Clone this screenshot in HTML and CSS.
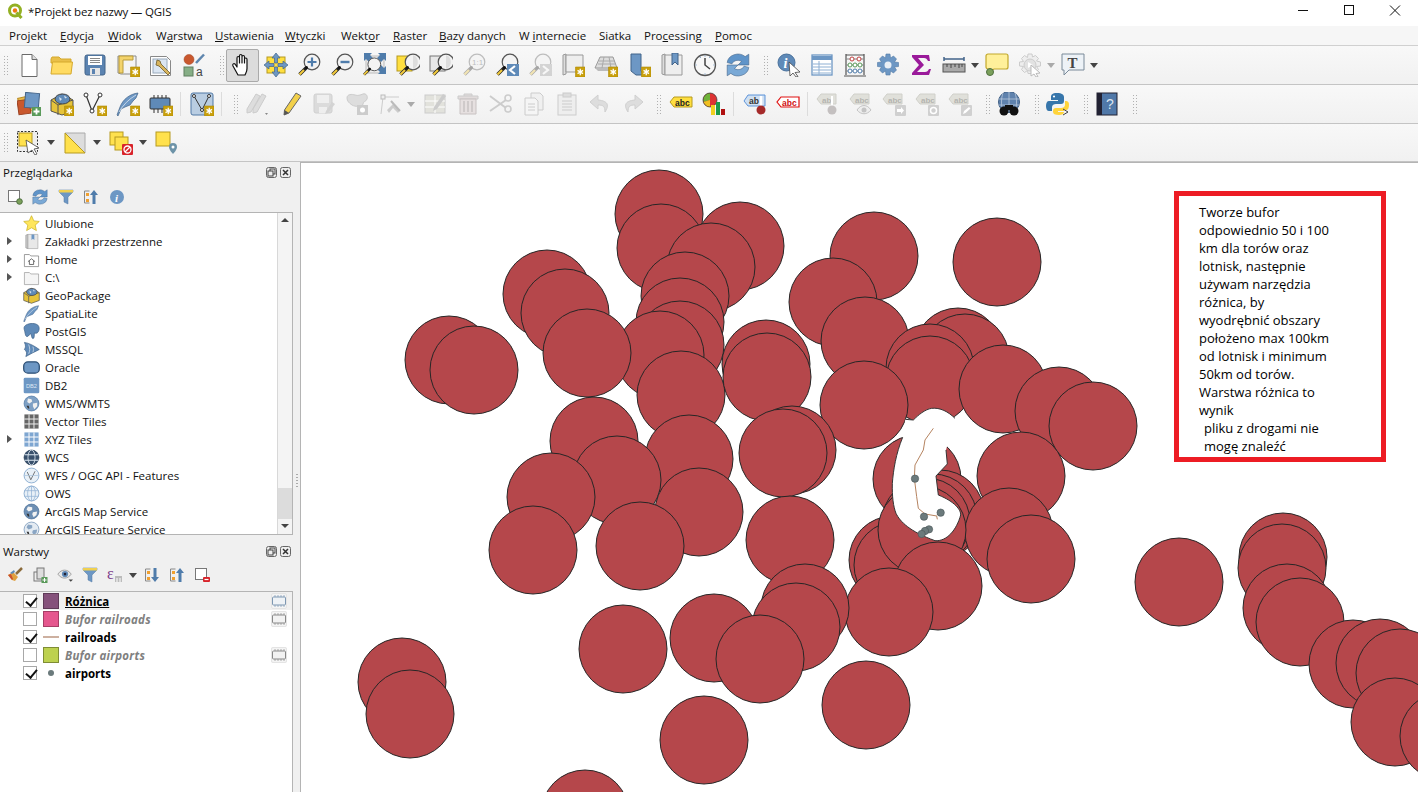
FILE: index.html
```html
<!DOCTYPE html>
<html lang="pl">
<head>
<meta charset="utf-8">
<title>*Projekt bez nazwy — QGIS</title>
<link rel="stylesheet" href="styles.css">
</head>
<body>
<svg class="defs" width="0" height="0">
<defs>
<g id="star"><path d="M14.500 14h9.500v10h-9.500z" fill="#c9a00c" stroke="#b08a08" stroke-width=".6"/><path d="M19.250 15.800v6.400M16.500 17.400l5.500 3.200M22 17.400l-5.500 3.200" stroke="#fff" stroke-width="1.300"/></g>
<symbol id="new" viewBox="0 0 24 24"><path d="M5 1.500h10l5 5v17H5z" fill="#fff" stroke="#6a6a6a"/><path d="M15 1.500v5h5" fill="#ddd" stroke="#6a6a6a"/></symbol>
<symbol id="open" viewBox="0 0 24 24"><path d="M1 6l1-2h7l2 2h10v4H1z" fill="#e9bf49" stroke="#d5a92d"/><path d="M1 21l1.500-12h20L21 21z" fill="#ffdb63" stroke="#d5a92d"/></symbol>
<symbol id="save" viewBox="0 0 24 24"><rect x="2" y="2" width="20" height="20" rx="2" fill="#5b83b1" stroke="#43648a"/><rect x="5" y="3" width="14" height="9" fill="#fff"/><path d="M7 5.500h10M7 7.500h10M7 9.500h10" stroke="#888"/><rect x="7" y="15" width="10" height="7" fill="#e6e6e6"/><rect x="9" y="16" width="3" height="5" fill="#5b83b1"/></symbol>
<symbol id="templ" viewBox="0 0 24 24"><path d="M2 3h18v18H5l-3-1z" fill="#f4f4f4" stroke="#8a8a8a"/><path d="M3 3h14v4H7v13H3z" fill="#f3d36b" stroke="#b99b3a"/><use href="#star"/></symbol>
<symbol id="layout" viewBox="0 0 24 24"><path d="M1.500 3.500h16l4 4v15h-20z" fill="#fff" stroke="#888"/><rect x="4" y="6" width="14" height="14" fill="#dbe6f3" stroke="#9ab"/><path d="M8 7l3 1 1 3 9 9-2 2-9-9-3-1z" fill="#d8b55e" stroke="#6d5a2a" stroke-width=".8"/></symbol>
<symbol id="style" viewBox="0 0 24 24"><circle cx="7" cy="6.500" r="5" fill="#c9582e" stroke="#a14522" stroke-width=".5"/><path d="M14 10L22 1.500" stroke="#5f86ae" stroke-width="2.500"/><rect x="2" y="14" width="9" height="9" fill="#86ae86" stroke="#5f7f5f"/><text x="14" y="23" class="svt" font-size="12" fill="#444">a</text></symbol>
<symbol id="hand" viewBox="0 0 24 24"><path d="M7 22l-5-9c-1-2 1-3 2-2l2 3V5c0-2 2.500-2 2.500 0v5V3c0-2 2.500-2 2.500 0v7V4c0-2 2.500-2 2.500 0v6-3.500c0-2 2.500-2 2.500 0v9c0 3-1 4-2 6.500z" fill="#fff" stroke="#111" stroke-width="1.200" stroke-linejoin="round"/></symbol>
<symbol id="panmap" viewBox="0 0 24 24"><rect x="3" y="4" width="18" height="16" fill="#ffdf3f" stroke="#b69a20"/><path d="M12 0l4 5h-2.500v5h-3V5H8zM12 24l4-5h-2.500v-5h-3v5H8zM0 12l5-4v2.500h5v3H5V16zM24 12l-5-4v2.500h-5v3h5V16z" fill="#6d97c4" stroke="#43648a" stroke-width=".7"/></symbol>
<g id="lens"><circle cx="15" cy="9" r="7.800" fill="#f3f3f3" stroke="#555" stroke-width="1.200"/><path d="M9.500 14.500L2.500 21.500" stroke="#222" stroke-width="3.400"/><path d="M7 17L2.500 21.500" stroke="#f2ca3d" stroke-width="2.200"/><circle cx="9.500" cy="14.500" r="1.500" fill="#111"/></g>
<symbol id="zin" viewBox="0 0 24 24"><use href="#lens"/><path d="M15 4.500v9M10.500 9h9" stroke="#4f7cab" stroke-width="2.200"/></symbol>
<symbol id="zout" viewBox="0 0 24 24"><use href="#lens"/><path d="M10.500 9h9" stroke="#4f7cab" stroke-width="2.400"/></symbol>
<symbol id="zfull" viewBox="0 0 24 24"><rect x="3" y="3" width="18" height="17" fill="#eee" stroke="#bbb"/><path d="M1 0h8L7 2l3 3-4 4-3-3-2 2zM23 0h-8l2 2-3 3 4 4 3-3 2 2zM23 21h-8l2-2-3-3 4-4 3 3 2-2z" fill="#4f7cab"/><use href="#lens" transform="translate(-1 4) scale(.82)"/></symbol>
<symbol id="zsel" viewBox="0 0 24 24"><rect x="1" y="3" width="15" height="15" fill="#ffdf3f" stroke="#b69a20"/><use href="#lens" transform="translate(2 0)"/><path d="M17 2a7.500 7.500 0 0 1 0 14z" fill="#ddd"/></symbol>
<symbol id="zlay" viewBox="0 0 24 24"><rect x="1" y="3" width="15" height="15" fill="#e8e8e8" stroke="#777"/><use href="#lens" transform="translate(2 0)"/><path d="M17 2a7.500 7.500 0 0 1 0 14z" fill="#ddd"/></symbol>
<symbol id="znat" viewBox="0 0 24 24"><g opacity=".35"><use href="#lens"/><text x="10" y="12" class="svt" font-size="8" fill="#555">1:1</text></g></symbol>
<symbol id="zlast" viewBox="0 0 24 24"><use href="#lens"/><rect x="12" y="11" width="12" height="12" fill="#5f8ab8"/><path d="M20 13l-5 4 5 4" fill="none" stroke="#fff" stroke-width="2.200"/></symbol>
<symbol id="znext" viewBox="0 0 24 24"><g opacity=".35"><use href="#lens"/><rect x="12" y="11" width="12" height="12" fill="#999"/><path d="M15 13l5 4-5 4" fill="none" stroke="#fff" stroke-width="2.200"/></g></symbol>
<symbol id="view" viewBox="0 0 24 24"><path d="M2 2l3-1v20l-3 1z" fill="#ddd" stroke="#999"/><path d="M5 2h17v17H5z" fill="#eee" stroke="#999"/><use href="#star"/></symbol>
<symbol id="view3d" viewBox="0 0 24 24"><path d="M6 4h13l4 11H1z" fill="#ddd" stroke="#999"/><path d="M5 8h15M4 11h17M10 4L8 15M15 4l2 11" stroke="#aaa" fill="none"/><path d="M1 15h18v3H4z" fill="#bbb"/><use href="#star"/></symbol>
<symbol id="bm" viewBox="0 0 24 24"><path d="M4 1h10v17l3 4H9L4 18z" fill="#6d97c4" stroke="#43648a"/><use href="#star"/></symbol>
<symbol id="bms" viewBox="0 0 24 24"><path d="M2 2l3-1v21l-3-1z" fill="#ddd" stroke="#999"/><path d="M5 2h17v20H5z" fill="#eee" stroke="#999"/><path d="M12 0h6v12l-3-3-3 3z" fill="#6d97c4" stroke="#43648a"/></symbol>
<symbol id="clock" viewBox="0 0 24 24"><circle cx="12" cy="12" r="10.500" fill="#f7f7f7" stroke="#555" stroke-width="1.300"/><path d="M12 5v7l5 4" fill="none" stroke="#444" stroke-width="1.500"/><path d="M12 2.500v1M12 20.500v1M2.500 12h1M20.500 12h1M7 3.800l.5 1M17 3.800l-.5 1" stroke="#5f8ab8"/></symbol>
<symbol id="sync" viewBox="2 2 20 20"><path d="M3 10a9 8 0 0 1 15-5l3-2v9h-9l3-3a5 4 0 0 0-8 2z" fill="#5f94c9" stroke="#43648a" stroke-width=".5"/><path d="M21 14a9 8 0 0 1-15 5l-3 2v-9h9l-3 3a5 4 0 0 0 8-2z" fill="#7aa9d6" stroke="#43648a" stroke-width=".5"/></symbol>
<symbol id="ident" viewBox="0 0 24 24"><circle cx="9.500" cy="9.500" r="8.500" fill="#5f8ab8" stroke="#48709b"/><text x="6.500" y="14.500" class="svi" font-size="14" fill="#fff">i</text><path d="M12 9l11 10-5 .5 3 4-2 .5-3-4-3 3z" fill="#fff" stroke="#444" stroke-width=".8"/></symbol>
<symbol id="table" viewBox="0 0 24 24"><rect x="2" y="2" width="20" height="20" fill="#fff" stroke="#6d97c4" stroke-width="1.300"/><path d="M2 3h20v4H2z" fill="#6d97c4"/><path d="M9 8v14M3 11h18M3 14h18M3 17h18M3 20h18" stroke="#8fb0d3"/></symbol>
<symbol id="abacus" viewBox="0 0 24 24"><path d="M3 1v21M21 1v21M1 23h22M3 2h18" stroke="#555" stroke-width="1.200" fill="none"/><path d="M3 6h18M3 12h18M3 18h18" stroke="#888"/><g fill="#fff" stroke="#c24040"><circle cx="9" cy="6" r="2"/><circle cx="16" cy="6" r="2"/></g><g fill="#fff" stroke="#5a9a5a"><circle cx="7" cy="12" r="2"/><circle cx="12" cy="12" r="2"/><circle cx="17" cy="12" r="2"/></g><g fill="#fff" stroke="#4f7cab"><circle cx="7" cy="18" r="2"/><circle cx="12" cy="18" r="2"/><circle cx="17" cy="18" r="2"/></g></symbol>
<symbol id="gear" viewBox="0 0 24 24"><path d="M10 1h4l.5 4 3-2 3 3-2 3 4 .5v4l-4 .5 2 3-3 3-3-2-.5 4h-4l-.5-4-3 2-3-3 2-3-4-.5v-4l4-.5-2-3 3-3 3 2z" fill="#6d97c4" stroke="#5078a5" stroke-width=".6"/><circle cx="12" cy="12" r="3.500" fill="#e9eff6"/></symbol>
<symbol id="sigma" viewBox="0 0 24 24"><path d="M3 2h17l1 6h-2c-1-2-2-3-4-3H9l6 7-7 7h8c2 0 3-1 4-3h2l-2 6H3v-2l7-8-7-8z" fill="#9a1a9a"/></symbol>
<symbol id="ruler" viewBox="0 0 24 24"><path d="M2 4v4M22 4v4M2 6h20" stroke="#43648a" stroke-width="1.500"/><rect x="1" y="11" width="22" height="8" fill="#aaa" stroke="#555"/><path d="M5 11v3M9 11v4M13 11v3M17 11v4M20 11v3" stroke="#444"/></symbol>
<symbol id="note" viewBox="0 0 24 24"><path d="M3 1h18a2 2 0 0 1 2 2v11a2 2 0 0 1-2 2H9l-3 2-1-2H3a2 2 0 0 1-2-2V3a2 2 0 0 1 2-2z" fill="#fff09a" stroke="#c2a82c" stroke-width="1.200"/><circle cx="5" cy="19" r="3.500" fill="#7ba05b" stroke="#4f7040"/></symbol>
<symbol id="gearoff" viewBox="0 0 24 24"><path d="M10 1h4l.5 3 3-1.500 3 3-2 2.500 4 1v4l-4 .5 2 3-3 3-3-2-.5 3h-4l-.5-3-3 2-3-3 2-3-4-.5v-4l4-.5-2-3 3-3 3 2z" fill="#eee" stroke="#ccc"/><circle cx="12" cy="12" r="6" fill="#e2e2e2" stroke="#ccc"/><path d="M10 9v6l5-3z" fill="#fff"/><path d="M13 12l9 8-4 .5 2 3-2 .5-2-3-3 2z" fill="#fff" stroke="#bbb"/></symbol>
<symbol id="textann" viewBox="0 0 24 24"><path d="M1 1h22v16H8l-5 5v-5H1z" fill="#edf2f7" stroke="#7a8a99"/><text x="6.500" y="14.500" class="svs" font-size="15" font-weight="700" fill="#444">T</text></symbol>
<symbol id="addlay" viewBox="0 0 24 24"><rect x="2" y="5" width="13" height="15" fill="#e8b94a" stroke="#b98a20" transform="rotate(-12 8 12)"/><rect x="1" y="8" width="12" height="14" fill="#c9582e" stroke="#9a4020" transform="rotate(-8 7 15)"/><rect x="8" y="1" width="14" height="15" fill="#6d97c4" stroke="#43648a" transform="rotate(5 15 8)"/><rect x="15" y="15" width="9" height="9" fill="#5a9a5a"/><path d="M19.500 16.500v6M16.500 19.500h6" stroke="#fff" stroke-width="1.800"/></symbol>
<symbol id="gpkg" viewBox="0 0 24 24"><path d="M1 8l11-6 11 6v11l-11 4L1 19z" fill="#e6c33a" stroke="#444" stroke-width=".9"/><path d="M1 8l7 5 15-5" fill="none" stroke="#555"/><path d="M8 13v10" stroke="#555"/><ellipse cx="12.500" cy="7" rx="7.500" ry="5" fill="#5f8ab8" stroke="#444"/><path d="M9 5l3 2-2 2zM14 3.500l3 2-2 1z" fill="#d8e3ee"/></symbol>
<symbol id="gpkgb" viewBox="0 0 24 24"><use href="#gpkg"/><use href="#star"/></symbol>
<symbol id="newv" viewBox="0 0 24 24"><path d="M3 3l6 16 8-16" fill="none" stroke="#333" stroke-width="1.200"/><g fill="#fff" stroke="#333"><circle cx="3" cy="3" r="2"/><circle cx="9" cy="19" r="2"/><circle cx="17" cy="3" r="2"/></g><use href="#star"/></symbol>
<symbol id="quill" viewBox="0 0 24 24"><path d="M22 1C14 2 7 7 4 15l-3 8 1 1 3-7 4-2 5-2 3-4 3-3z" fill="#6d97c4" stroke="#43648a" stroke-width=".7"/><path d="M3 20C7 13 13 7 20 3" stroke="#dce6f0" fill="none" stroke-width=".8"/></symbol>
<symbol id="quillb" viewBox="0 0 24 24"><use href="#quill"/><use href="#star"/></symbol>
<symbol id="chip" viewBox="0 0 24 24"><path d="M5 3v18M9 3v18M13 3v18M17 3v18" stroke="#333"/><rect x="1" y="6" width="20" height="11" rx="1" fill="#5f8ab8" stroke="#333"/><use href="#star"/></symbol>
<symbol id="mesh" viewBox="0 0 24 24"><rect x="1" y="1" width="22" height="22" rx="2" fill="#b9cde2" stroke="#5078a5"/><path d="M4 4l8 14 7-14" fill="none" stroke="#333"/><g fill="#fff" stroke="#333"><circle cx="4" cy="4" r="1.500"/><circle cx="12" cy="18" r="1.500"/><circle cx="19" cy="4" r="1.500"/></g><use href="#star"/></symbol>
<symbol id="pencils" viewBox="0 0 24 24"><path d="M16 2l4 2-9 16-4 1v-4zM10 2l4 2-9 16-4 1v-4z" fill="#ddd" stroke="#ccc"/><path d="M19 21l3 0-1.500 2z" fill="#888"/></symbol>
<symbol id="pencil" viewBox="0 0 24 24"><path d="M17 1l5 3-12 17-5 2 .5-5z" fill="#f2d04a" stroke="#666"/><path d="M5.500 18L5 23l5-2z" fill="#555"/></symbol>
<symbol id="saved" viewBox="0 0 24 24"><g opacity=".8"><rect x="2" y="2" width="18" height="19" rx="2" fill="#d6d6d6" stroke="#c8c8c8"/><rect x="5" y="3" width="12" height="8" fill="#eee"/><rect x="7" y="15" width="8" height="6" fill="#eee"/><path d="M20 10l3 2-7 9-3 1 1-3z" fill="#ccc"/></g></symbol>
<symbol id="blob" viewBox="0 0 24 24"><path d="M2 6c0-4 5-4 8-3s5 0 8-1 5 2 4 5-4 2-4 5-8 3-11 1-5-4-5-7z" fill="#ddd" stroke="#ccc"/><rect x="12" y="13" width="11" height="10" fill="#ccc"/><circle cx="17.500" cy="18" r="2.500" fill="#fff"/></symbol>
<symbol id="vert" viewBox="0 0 24 24"><path d="M3 22L5 5h16" fill="none" stroke="#ccc"/><rect x="3" y="3" width="4" height="4" fill="#eee" stroke="#bbb"/><path d="M9 18l6-6 7 6-2 3-5-5-4 5z" fill="#ccc"/><path d="M13 9l9 10" stroke="#bbb" stroke-width="2"/></symbol>
<symbol id="editt" viewBox="0 0 24 24"><rect x="2" y="3" width="20" height="18" fill="#e2e2dc" stroke="#ccc"/><path d="M2 9h20M2 15h20M12 3v18" stroke="#fff"/><path d="M20 2l3 2-9 13-4 2 1-4z" fill="#ccc"/></symbol>
<symbol id="trash" viewBox="0 0 24 24"><path d="M2 4h20v3H2zM8 4V2h8v2" fill="#e2dcdc" stroke="#ccc"/><path d="M4 7h16v15H4z" fill="#e6e0e0" stroke="#c8c2c2"/><path d="M8 9v11M12 9v11M16 9v11" stroke="#c8c2c2" stroke-width="1.500"/></symbol>
<symbol id="cut" viewBox="0 0 24 24"><path d="M1 4l16 12M1 19L17 8" stroke="#ccc" stroke-width="2"/><circle cx="19" cy="6" r="3" fill="none" stroke="#ccc" stroke-width="1.600"/><circle cx="19" cy="17" r="3" fill="none" stroke="#ccc" stroke-width="1.600"/></symbol>
<symbol id="copy" viewBox="0 0 24 24"><path d="M9 1h9l3 3v14H9z" fill="#f0f0f0" stroke="#ccc"/><path d="M3 6h10l3 3v14H3z" fill="#f5f5f5" stroke="#ccc"/><path d="M6 12h7M6 15h7M6 18h7" stroke="#ccc"/></symbol>
<symbol id="paste" viewBox="0 0 24 24"><rect x="3" y="3" width="18" height="20" fill="#eee" stroke="#ccc"/><rect x="8" y="1" width="8" height="4" fill="#ddd" stroke="#ccc"/><path d="M7 9h10M7 12h10M7 15h10M7 18h10" stroke="#ccc"/></symbol>
<symbol id="undo" viewBox="0 0 24 24"><path d="M10 3L2 10l8 7v-4c5 0 7 1 7 7 4-6 4-11-7-12z" fill="#ddd" stroke="#d0d0d0"/></symbol>
<symbol id="redo" viewBox="0 0 24 24"><path d="M14 3l8 7-8 7v-4c-5 0-7 1-7 7-4-6-4-11 7-12z" fill="#ddd" stroke="#d0d0d0"/></symbol>
<symbol id="abcy" viewBox="0 0 24 24"><path d="M5 5h18v10H5l-4-5z" fill="#ffdf3f" stroke="#b69a20"/><text x="6" y="13.500" class="svs2" font-size="8.500" font-weight="700" fill="#222">abc</text></symbol>
<symbol id="diag" viewBox="0 0 24 24"><circle cx="8" cy="8" r="7" fill="#d33"/><path d="M8 8V1a7 7 0 0 0-6.500 9z" fill="#6fb33a"/><path d="M8 8l-6.500 2A7 7 0 0 0 8 15z" fill="#f0c020"/><circle cx="8" cy="8" r="7" fill="none" stroke="#333" stroke-width=".7"/><rect x="9" y="13" width="4" height="10" fill="#f0d020"/><rect x="14" y="10" width="4" height="13" fill="#1a9a4a"/><rect x="19" y="17" width="4" height="6" fill="#b01010"/></symbol>
<symbol id="abpin" viewBox="0 0 24 24"><path d="M5 3h17v11H5l-4-5z" fill="#cfe0f2" stroke="#5f94d9"/><text x="6" y="11.500" class="svs2" font-size="8.500" font-weight="700" fill="#333">ab</text><path d="M18 4v12" stroke="#fff" stroke-width="2.500"/><circle cx="18" cy="18" r="4.500" fill="#a52a2a"/></symbol>
<symbol id="abcr" viewBox="0 0 24 24"><path d="M5 5h18v10H5l-4-5z" fill="#fff" stroke="#e01010" stroke-width="1.200"/><text x="6" y="13.500" class="svs2" font-size="8.500" font-weight="700" fill="#d01010">abc</text></symbol>
<g id="abcg"><path d="M5 2h15v10H5l-4-5z" fill="#e0e0da" stroke="#d0d0ca"/><text x="6" y="10.500" class="svs2" font-size="8" font-weight="700" fill="#b4b4b0">abc</text></g>
<symbol id="lb1" viewBox="0 0 24 24"><path d="M5 2h15v10H5l-4-5z" fill="#e0e0da" stroke="#d0d0ca"/><text x="6" y="10.500" class="svs2" font-size="8" font-weight="700" fill="#b4b4b0">ab</text><path d="M16 4v12" stroke="#fff" stroke-width="2"/><circle cx="16" cy="18" r="4.500" fill="#c4c0c0"/></symbol>
<symbol id="lb2" viewBox="0 0 24 24"><use href="#abcg"/><path d="M8 18c4-6 10-6 14 0-4 5-10 5-14 0z" fill="#eee" stroke="#c4c4c4"/><circle cx="15" cy="18" r="2.500" fill="#c4c4c4"/></symbol>
<symbol id="lb3" viewBox="0 0 24 24"><use href="#abcg"/><rect x="13" y="13" width="11" height="11" rx="1" fill="#d0d0d0"/><path d="M15 17h4v-2l3 3.500-3 3.500v-2h-4z" fill="#fff"/></symbol>
<symbol id="lb4" viewBox="0 0 24 24"><use href="#abcg"/><rect x="13" y="13" width="11" height="11" rx="1" fill="#d0d0d0"/><circle cx="18.500" cy="18.500" r="3" fill="none" stroke="#fff" stroke-width="1.500"/></symbol>
<symbol id="lb5" viewBox="0 0 24 24"><use href="#abcg"/><rect x="13" y="13" width="11" height="11" rx="1" fill="#d0d0d0"/><path d="M15 22l1-3 5-4 1.500 1.500-5 4.500z" fill="#fff"/></symbol>
<symbol id="globeb" viewBox="0 0 24 24"><circle cx="12" cy="10" r="10.500" fill="#5f82ad" stroke="#3f5f85"/><path d="M2 7h20M2 13h20M12 0v20M6 1c-2 5-2 13 0 18M18 1c2 5 2 13 0 18" stroke="#c5d3e3" fill="none" stroke-width=".7"/><circle cx="7" cy="19" r="4.500" fill="#111"/><circle cx="17" cy="19" r="4.500" fill="#111"/><rect x="8" y="13" width="8" height="5" fill="#111"/></symbol>
<symbol id="python" viewBox="0 0 24 24"><path d="M11 1c-5 0-6 2-6 4v3h7v1H3c-2 0-3 2-3 5s1 5 3 5h3v-4c0-2 2-3 4-3h5c2 0 3-1 3-3V5c0-2-2-4-7-4z" fill="#3776ab"/><circle cx="8" cy="4.500" r="1.100" fill="#fff"/><path d="M19 9v4c0 2-2 3-4 3h-5c-2 0-3 1-3 3v1c0 2 2 3 6 3 3 0 5-1 5-3h-6v-1h6v-1h2c2 0 3-2 3-5s-1-4-3-4z" fill="#ffd43b"/><path d="M17 17l5 3-5 3" fill="none" stroke="#444" stroke-width="1"/></symbol>
<symbol id="help" viewBox="0 0 24 24"><rect x="2" y="1" width="20" height="22" fill="#5078a8" stroke="#223"/><rect x="2" y="1" width="5" height="22" fill="#223"/><text x="11" y="17" class="svs2" font-size="14" fill="#dde6f0">?</text></symbol>
<symbol id="select" viewBox="0 0 24 24"><rect x=".5" y=".5" width="20" height="20" fill="#eee" stroke="#333" stroke-dasharray="2 1.500"/><rect x="2" y="2" width="13" height="13" fill="#ffe14d" stroke="#b69a20"/><path d="M9 9l13 8-5 1 3 5-2 1-3-5-4 3z" fill="#fff" stroke="#444" stroke-width=".8"/></symbol>
<symbol id="seltri" viewBox="0 0 24 24"><path d="M2 2h20v20z" fill="#ddd" stroke="#aaa"/><path d="M2 2v20h20z" fill="#ffe14d" stroke="#b69a20"/></symbol>
<symbol id="deselect" viewBox="0 0 24 24"><rect x="1" y="1" width="13" height="13" fill="#ffe14d" stroke="#b69a20"/><rect x="6" y="6" width="13" height="13" fill="#ffe14d" stroke="#b69a20"/><rect x="13" y="13" width="11" height="11" rx="1" fill="#d8232a"/><circle cx="18.500" cy="18.500" r="3.500" fill="none" stroke="#fff" stroke-width="1.300"/><path d="M16 21l5-5" stroke="#fff" stroke-width="1.300"/></symbol>
<symbol id="selloc" viewBox="0 0 24 24"><rect x="1" y="1" width="14" height="14" fill="#ffe14d" stroke="#b69a20"/><path d="M18 12a4 4 0 0 1 4 4c0 3-4 7-4 7s-4-4-4-7a4 4 0 0 1 4-4z" fill="#6d93a8"/><circle cx="18" cy="16" r="1.500" fill="#fff"/></symbol>
<symbol id="t-star" viewBox="0 0 24 24"><path d="M12 1l3.300 7.300 7.700.8-5.800 5.200 1.700 7.700-6.900-4-6.900 4 1.700-7.700L1 9.100l7.700-.8z" fill="#ffe65c" stroke="#c9b021"/></symbol>
<symbol id="t-bm" viewBox="0 0 24 24"><path d="M4 3l3-1v20l-3-1z" fill="#ccc" stroke="#999"/><path d="M7 2h14v20H7z" fill="#e8e8e8" stroke="#aaa"/><path d="M12 2h4v8l-2-2-2 2z" fill="#6d97c4"/></symbol>
<symbol id="t-home" viewBox="0 0 24 24"><path d="M2 5h7l2 2h11v15H2z" fill="#fff" stroke="#777"/><path d="M7 15l5-4 5 4M9 14v5h6v-5" fill="none" stroke="#333"/></symbol>
<symbol id="t-dir" viewBox="0 0 24 24"><path d="M2 5h7l2 2h11v15H2z" fill="#f5f5f5" stroke="#999"/></symbol>
<symbol id="t-pg" viewBox="0 0 24 24"><path d="M6 2c4-2 12-2 15 1s2 9-1 11c-2 1-4 0-4 0 0 4 0 8-2 8s-2-6-3-7c-3 2-4 5-6 4s-2-6-3-9-1-6 4-8z" fill="#5f8ab8" stroke="#3f6288"/></symbol>
<symbol id="t-ms" viewBox="0 0 24 24"><path d="M2 2c7 1 14 5 21 10-7 4-13 6-19 10 2-5 1-8-2-10 2-3 2-6 0-10z" fill="#5f8ab8" stroke="#3f6288"/><path d="M8 5c2 5 2 9 0 13M14 8c1 3 1 5 0 8" fill="none" stroke="#dce6f0"/></symbol>
<symbol id="t-or" viewBox="0 0 24 24"><rect x="1" y="4" width="22" height="16" rx="6" fill="#6d97c4" stroke="#2d4f74" stroke-width="1.800"/></symbol>
<symbol id="t-db2" viewBox="0 0 24 24"><rect x="1" y="1" width="22" height="22" rx="2" fill="#6d97c4"/><text x="12" y="15" text-anchor="middle" class="svs2" font-size="8" fill="#dfe9f4">DB2</text></symbol>
<symbol id="t-globe" viewBox="0 0 24 24"><circle cx="12" cy="12" r="10.500" fill="#7ea0c4" stroke="#5078a5"/><path d="M7 5l5 1 1 3-4 3-3-2zM14 12l6-1 0 5-4 4-2-4z" fill="#f0f0f0"/><path d="M5 15l3 0 1 4-2 0z" fill="#333"/></symbol>
<symbol id="t-grid" viewBox="0 0 24 24"><rect x="2" y="2" width="20" height="20" fill="#666"/><path d="M8.500 2v20M15.500 2v20M2 8.500h20M2 15.500h20" stroke="#eee" stroke-width="1.400"/></symbol>
<symbol id="t-xyz" viewBox="0 0 24 24"><rect x="2" y="2" width="20" height="20" fill="#7ea6d1"/><path d="M8.500 2v20M15.500 2v20M2 8.500h20M2 15.500h20" stroke="#fff" stroke-width="1.400"/></symbol>
<symbol id="t-wcs" viewBox="0 0 24 24"><circle cx="12" cy="12" r="10.500" fill="#38506c" stroke="#243a54"/><path d="M2 8h20M2 16h20" stroke="#dbe6f0" stroke-width="1.500"/><ellipse cx="12" cy="12" rx="5" ry="10.500" fill="none" stroke="#dbe6f0" stroke-width="1.200"/></symbol>
<symbol id="t-wfs" viewBox="0 0 24 24"><circle cx="12" cy="12" r="10.500" fill="#e8f0f7" stroke="#6d97c4"/><path d="M6 7l5 11 6-12" fill="none" stroke="#444"/><path d="M1.500 12h21" stroke="#a8c2dc"/></symbol>
<symbol id="t-ows" viewBox="0 0 24 24"><circle cx="12" cy="12" r="10.500" fill="#e8f0f7" stroke="#6d97c4"/><path d="M2 8h20M2 16h20M12 2v20" stroke="#8fb0d3"/><ellipse cx="12" cy="12" rx="5.500" ry="10.500" fill="none" stroke="#8fb0d3"/></symbol>
<symbol id="t-arc" viewBox="0 0 24 24"><circle cx="12" cy="12" r="10.500" fill="#6d8fb4" stroke="#4a6e96"/><path d="M7 5l6 1 0 4-5 2-3-3zM14 13l6-1-1 5-4 3-2-4z" fill="#f2f2f2"/><path d="M5 15l3 0 1 4-2 0z" fill="#333"/></symbol>
<symbol id="t-arcf" viewBox="0 0 24 24"><circle cx="12" cy="12" r="10.500" fill="#e4ebf2" stroke="#6d8fb4"/><path d="M7 5l6 1 0 4-5 2-3-3zM14 13l6-1-1 5-4 3-2-4z" fill="#8aa6c4"/><path d="M5 15l3 0 1 4-2 0z" fill="#333"/></symbol>
<symbol id="p-new" viewBox="0 0 16 16"><rect x="1.500" y="1.500" width="11" height="11" fill="#fff" stroke="#777"/><circle cx="12.500" cy="12.500" r="2.800" fill="#7ba05b" stroke="#4f7040"/></symbol>
<symbol id="p-filter" viewBox="0 0 16 16"><path d="M1 1h14v2L10 8v7l-4-2V8L1 3z" fill="#6d97c4" stroke="#5078a5" stroke-width=".5"/><path d="M1 1h14v2.500H1z" fill="#f0d050"/></symbol>
<symbol id="p-col" viewBox="0 0 16 16"><path d="M1.500 2v12M1.500 2h5M1.500 14h5" stroke="#888" fill="none"/><rect x="3" y="4" width="3" height="3" fill="#f0a030"/><rect x="3" y="10" width="3" height="3" fill="#f0a030"/><path d="M11 1l4 5h-2.500v9h-3V6H7z" fill="#4f7cab"/></symbol>
<symbol id="p-exp" viewBox="0 0 16 16"><path d="M1.500 2v12M1.500 2h5M1.500 14h5" stroke="#888" fill="none"/><rect x="3" y="4" width="3" height="3" fill="#f0a030"/><rect x="3" y="10" width="3" height="3" fill="#f0a030"/><path d="M11 15l4-5h-2.500V1h-3v9H7z" fill="#4f7cab"/></symbol>
<symbol id="p-info" viewBox="0 0 16 16"><circle cx="8" cy="8" r="7" fill="#6d97c4"/><text x="6" y="12.500" class="svi" font-size="11" fill="#fff">i</text></symbol>
<symbol id="p-style" viewBox="0 0 16 16"><path d="M1 8l5-3 5 5-3 4-3-1z" fill="#e0a040"/><path d="M1 8l3-1 2 5-1 1z" fill="#c9502e"/><path d="M9 7l6-6" stroke="#8a6a3a" stroke-width="2.500"/><path d="M3 6l4-3 1 2-3 2z" fill="#5f8ab8"/></symbol>
<symbol id="p-add" viewBox="0 0 16 16"><rect x="2" y="5" width="8" height="9" fill="#eee" stroke="#777"/><rect x="5" y="1" width="7" height="11" fill="#ddd" stroke="#777"/><rect x="9.500" y="10" width="6" height="6" fill="#5a9a5a"/><path d="M12.500 11v4M10.500 13h4" stroke="#fff"/></symbol>
<symbol id="p-eye" viewBox="0 0 18 16"><path d="M1 7c4-6 11-6 15 0-4 6-11 6-15 0z" fill="#e8e8e8" stroke="#999"/><circle cx="9" cy="7" r="3.500" fill="#5f8ab8"/><circle cx="9" cy="7" r="1.500" fill="#223"/><path d="M13 13h5l-2.500 2.500z" fill="#444"/></symbol>
<symbol id="p-eps" viewBox="0 0 16 16"><text x="0" y="12" class="svs" font-size="16" fill="#7a3a8a">ε</text><rect x="8" y="9" width="7" height="6" fill="#bbb"/><path d="M10 11v4M13 11v4" stroke="#fff"/></symbol>
<symbol id="p-rem" viewBox="0 0 16 16"><rect x="1.500" y="1.500" width="11" height="11" fill="#fff" stroke="#777"/><rect x="9" y="10" width="7" height="5" rx="1" fill="#d8232a"/><path d="M10.500 12.500h4" stroke="#fff" stroke-width="1.200"/></symbol>
<symbol id="chipi" viewBox="0 0 16 16"><path d="M4 2v12M7 2v12M10 2v12M13 2v12" stroke="#8aa2bb" stroke-width=".8"/><rect x="1.500" y="4" width="13" height="8" rx="1" fill="#eef2f6" stroke="#7d97b2"/></symbol>
<symbol id="chipg" viewBox="0 0 16 16"><path d="M4 2v12M7 2v12M10 2v12M13 2v12" stroke="#999" stroke-width=".8"/><rect x="1.500" y="4" width="13" height="8" rx="1" fill="#f2f2f2" stroke="#888"/></symbol>
<symbol id="float" viewBox="0 0 11 11"><rect x=".5" y=".5" width="10" height="10" rx="2" fill="#eee" stroke="#666"/><rect x="4" y="2" width="5" height="5" fill="none" stroke="#444"/><rect x="2" y="4" width="5" height="5" fill="#eee" stroke="#444"/></symbol>
<symbol id="close" viewBox="0 0 11 11"><rect x=".5" y=".5" width="10" height="10" rx="2" fill="#eee" stroke="#666"/><path d="M3 3l5 5M8 3l-5 5" stroke="#333" stroke-width="1.500"/></symbol>
</defs>
</svg>

<header class="titlebar">
  <svg class="applogo" viewBox="0 0 16 16"><circle cx="8" cy="7.500" r="5.500" fill="#fff" stroke="#93b023" stroke-width="3"/><circle cx="8" cy="7.500" r="2.200" fill="#ee7913"/><path d="M9.500 9.500l5 5.500" stroke="#93b023" stroke-width="3"/></svg>
  <span class="apptitle">*Projekt bez nazwy — QGIS</span>
  <div class="winctl">
    <svg class="wbtn" viewBox="0 0 46 20"><path d="M18 10.500h10" stroke="#111"/></svg>
    <svg class="wbtn" viewBox="0 0 46 20"><rect x="18.500" y="5.500" width="9" height="9" fill="none" stroke="#111"/></svg>
    <svg class="wbtn" viewBox="0 0 46 20"><path d="M18 5.500l10 10M28 5.500l-10 10" stroke="#111"/></svg>
  </div>
</header>

<nav class="menubar">
  <span class="mi m1">Pro<u>j</u>ekt</span>
  <span class="mi m2"><u>E</u>dycja</span>
  <span class="mi m3"><u>W</u>idok</span>
  <span class="mi m4">W<u>a</u>rstwa</span>
  <span class="mi m5"><u>U</u>stawienia</span>
  <span class="mi m6"><u>W</u>tyczki</span>
  <span class="mi m7">Wekt<u>o</u>r</span>
  <span class="mi m8"><u>R</u>aster</span>
  <span class="mi m9"><u>B</u>azy danych</span>
  <span class="mi m10">W <u>i</u>nternecie</span>
  <span class="mi m11">Siatka</span>
  <span class="mi m12">Pro<u>c</u>essing</span>
  <span class="mi m13"><u>P</u>omoc</span>
</nav>

<div class="toolbar">
  <i class="handle"></i>
  <span class="tb"><svg class="ic"><use href="#new"/></svg></span>
  <span class="tb"><svg class="ic"><use href="#open"/></svg></span>
  <span class="tb"><svg class="ic"><use href="#save"/></svg></span>
  <span class="tb"><svg class="ic"><use href="#templ"/></svg></span>
  <span class="tb"><svg class="ic"><use href="#layout"/></svg></span>
  <span class="tb"><svg class="ic"><use href="#style"/></svg></span>
  <i class="handle h-wide"></i>
  <span class="tb on"><svg class="ic"><use href="#hand"/></svg></span>
  <span class="tb"><svg class="ic"><use href="#panmap"/></svg></span>
  <span class="tb"><svg class="ic"><use href="#zin"/></svg></span>
  <span class="tb"><svg class="ic"><use href="#zout"/></svg></span>
  <span class="tb"><svg class="ic"><use href="#zfull"/></svg></span>
  <span class="tb"><svg class="ic"><use href="#zsel"/></svg></span>
  <span class="tb"><svg class="ic"><use href="#zlay"/></svg></span>
  <span class="tb"><svg class="ic"><use href="#znat"/></svg></span>
  <span class="tb"><svg class="ic"><use href="#zlast"/></svg></span>
  <span class="tb"><svg class="ic"><use href="#znext"/></svg></span>
  <span class="tb"><svg class="ic"><use href="#view"/></svg></span>
  <span class="tb"><svg class="ic"><use href="#view3d"/></svg></span>
  <span class="tb"><svg class="ic"><use href="#bm"/></svg></span>
  <span class="tb"><svg class="ic"><use href="#bms"/></svg></span>
  <span class="tb"><svg class="ic"><use href="#clock"/></svg></span>
  <span class="tb"><svg class="ic"><use href="#sync"/></svg></span>
  <i class="handle h-mid"></i>
  <span class="tb"><svg class="ic"><use href="#ident"/></svg></span>
  <span class="tb"><svg class="ic"><use href="#table"/></svg></span>
  <span class="tb"><svg class="ic"><use href="#abacus"/></svg></span>
  <span class="tb"><svg class="ic"><use href="#gear"/></svg></span>
  <span class="tb"><svg class="ic"><use href="#sigma"/></svg></span>
  <span class="tb"><svg class="ic"><use href="#ruler"/></svg></span>
  <b class="arrow"></b>
  <span class="tb"><svg class="ic"><use href="#note"/></svg></span>
  <span class="tb"><svg class="ic"><use href="#gearoff"/></svg></span>
  <b class="arrow light"></b>
  <span class="tb"><svg class="ic"><use href="#textann"/></svg></span>
  <b class="arrow"></b>
</div>

<div class="toolbar">
  <i class="handle"></i>
  <span class="tb"><svg class="ic"><use href="#addlay"/></svg></span>
  <span class="tb"><svg class="ic"><use href="#gpkgb"/></svg></span>
  <span class="tb"><svg class="ic"><use href="#newv"/></svg></span>
  <span class="tb"><svg class="ic"><use href="#quillb"/></svg></span>
  <span class="tb"><svg class="ic"><use href="#chip"/></svg></span>
  <i class="sep"></i>
  <span class="tb tb-s"><svg class="ic"><use href="#mesh"/></svg></span>
  <i class="sep"></i>
  <i class="handle h-s"></i>
  <span class="tb"><svg class="ic"><use href="#pencils"/></svg></span>
  <span class="tb"><svg class="ic"><use href="#pencil"/></svg></span>
  <span class="tb"><svg class="ic"><use href="#saved"/></svg></span>
  <span class="tb"><svg class="ic"><use href="#blob"/></svg></span>
  <span class="tb"><svg class="ic"><use href="#vert"/></svg></span>
  <b class="arrow light a-s"></b>
  <span class="tb"><svg class="ic"><use href="#editt"/></svg></span>
  <span class="tb"><svg class="ic"><use href="#trash"/></svg></span>
  <span class="tb"><svg class="ic"><use href="#cut"/></svg></span>
  <span class="tb"><svg class="ic"><use href="#copy"/></svg></span>
  <span class="tb"><svg class="ic"><use href="#paste"/></svg></span>
  <span class="tb"><svg class="ic"><use href="#undo"/></svg></span>
  <span class="tb"><svg class="ic"><use href="#redo"/></svg></span>
  <i class="handle h-s2"></i>
  <span class="tb"><svg class="ic"><use href="#abcy"/></svg></span>
  <span class="tb"><svg class="ic"><use href="#diag"/></svg></span>
  <i class="sep"></i>
  <span class="tb tb-s"><svg class="ic"><use href="#abpin"/></svg></span>
  <span class="tb"><svg class="ic"><use href="#abcr"/></svg></span>
  <i class="sep"></i>
  <span class="tb"><svg class="ic"><use href="#lb1"/></svg></span>
  <span class="tb"><svg class="ic"><use href="#lb2"/></svg></span>
  <span class="tb"><svg class="ic"><use href="#lb3"/></svg></span>
  <span class="tb"><svg class="ic"><use href="#lb4"/></svg></span>
  <span class="tb"><svg class="ic"><use href="#lb5"/></svg></span>
  <i class="handle h-s3"></i>
  <span class="tb"><svg class="ic"><use href="#globeb"/></svg></span>
  <i class="handle h-s3"></i>
  <span class="tb"><svg class="ic"><use href="#python"/></svg></span>
  <i class="handle h-s3"></i>
  <span class="tb"><svg class="ic"><use href="#help"/></svg></span>
  <i class="handle h-s3"></i>
</div>

<div class="toolbar tb-last">
  <i class="handle"></i>
  <span class="tb"><svg class="ic"><use href="#select"/></svg></span>
  <b class="arrow a-3"></b>
  <span class="tb"><svg class="ic"><use href="#seltri"/></svg></span>
  <b class="arrow a-3"></b>
  <span class="tb"><svg class="ic"><use href="#deselect"/></svg></span>
  <b class="arrow a-3"></b>
  <span class="tb"><svg class="ic"><use href="#selloc"/></svg></span>
</div>

<main class="main">
  <aside class="docks">
    <section class="dock dock-browser">
      <div class="dock-head"><span>Przeglądarka</span><span class="dock-btns"><svg class="db"><use href="#float"/></svg><svg class="db"><use href="#close"/></svg></span></div>
      <div class="dock-tools">
        <span class="pt"><svg class="pi"><use href="#p-new"/></svg></span>
        <span class="pt"><svg class="pi"><use href="#sync"/></svg></span>
        <span class="pt"><svg class="pi"><use href="#p-filter"/></svg></span>
        <span class="pt"><svg class="pi"><use href="#p-col"/></svg></span>
        <span class="pt"><svg class="pi"><use href="#p-info"/></svg></span>
      </div>
      <div class="tree-wrap">
        <ul class="tree">
          <li><s class="tw none"></s><svg class="ti"><use href="#t-star"/></svg>Ulubione</li>
          <li><s class="tw"></s><svg class="ti"><use href="#t-bm"/></svg>Zakładki przestrzenne</li>
          <li><s class="tw"></s><svg class="ti"><use href="#t-home"/></svg>Home</li>
          <li><s class="tw"></s><svg class="ti"><use href="#t-dir"/></svg>C:\</li>
          <li><s class="tw none"></s><svg class="ti"><use href="#gpkg"/></svg>GeoPackage</li>
          <li><s class="tw none"></s><svg class="ti"><use href="#quill"/></svg>SpatiaLite</li>
          <li><s class="tw none"></s><svg class="ti"><use href="#t-pg"/></svg>PostGIS</li>
          <li><s class="tw none"></s><svg class="ti"><use href="#t-ms"/></svg>MSSQL</li>
          <li><s class="tw none"></s><svg class="ti"><use href="#t-or"/></svg>Oracle</li>
          <li><s class="tw none"></s><svg class="ti"><use href="#t-db2"/></svg>DB2</li>
          <li><s class="tw none"></s><svg class="ti"><use href="#t-globe"/></svg>WMS/WMTS</li>
          <li><s class="tw none"></s><svg class="ti"><use href="#t-grid"/></svg>Vector Tiles</li>
          <li><s class="tw"></s><svg class="ti"><use href="#t-xyz"/></svg>XYZ Tiles</li>
          <li><s class="tw none"></s><svg class="ti"><use href="#t-wcs"/></svg>WCS</li>
          <li><s class="tw none"></s><svg class="ti"><use href="#t-wfs"/></svg>WFS / OGC API - Features</li>
          <li><s class="tw none"></s><svg class="ti"><use href="#t-ows"/></svg>OWS</li>
          <li><s class="tw none"></s><svg class="ti"><use href="#t-arc"/></svg>ArcGIS Map Service</li>
          <li><s class="tw none"></s><svg class="ti"><use href="#t-arcf"/></svg>ArcGIS Feature Service</li>
        </ul>
        <div class="scroll">
          <b class="sb-up"></b><span class="sb-track"><i class="sb-thumb"></i></span><b class="sb-down"></b>
        </div>
      </div>
    </section>
    <section class="dock dock-layers">
      <div class="dock-head"><span>Warstwy</span><span class="dock-btns"><svg class="db"><use href="#float"/></svg><svg class="db"><use href="#close"/></svg></span></div>
      <div class="dock-tools dt-l">
        <span class="pt"><svg class="pi"><use href="#p-style"/></svg></span>
        <span class="pt"><svg class="pi"><use href="#p-add"/></svg></span>
        <span class="pt"><svg class="pi"><use href="#p-eye"/></svg></span>
        <span class="pt"><svg class="pi"><use href="#p-filter"/></svg></span>
        <span class="pt"><svg class="pi"><use href="#p-eps"/></svg></span><b class="arrow a-l"></b>
        <span class="pt"><svg class="pi"><use href="#p-exp"/></svg></span>
        <span class="pt"><svg class="pi"><use href="#p-col"/></svg></span>
        <span class="pt"><svg class="pi"><use href="#p-rem"/></svg></span>
      </div>
      <ul class="layers">
        <li class="cur"><span class="cb ck"></span><span class="sw sw1"></span><span class="ln active">Różnica</span><svg class="mem"><use href="#chipi"/></svg></li>
        <li><span class="cb"></span><span class="sw sw2"></span><span class="ln off">Bufor railroads</span><svg class="mem"><use href="#chipg"/></svg></li>
        <li><span class="cb ck"></span><span class="sw sw3"></span><span class="ln">railroads</span></li>
        <li><span class="cb"></span><span class="sw sw4"></span><span class="ln off">Bufor airports</span><svg class="mem"><use href="#chipg"/></svg></li>
        <li><span class="cb ck"></span><span class="sw sw5"></span><span class="ln">airports</span></li>
      </ul>
    </section>
  </aside>
  <div class="split"><i class="split-dots"></i></div>
  <div class="map">
    <svg class="canvas" viewBox="300 163 1118 629">
      <g class="bufs">
        <circle cx="659" cy="214" r="44"/><circle cx="740" cy="246" r="44"/><circle cx="661" cy="248" r="44"/><circle cx="711" cy="267" r="44"/><circle cx="874" cy="256" r="44"/><circle cx="997" cy="262" r="44"/>
        <circle cx="547" cy="294" r="44"/><circle cx="565" cy="313" r="44"/><circle cx="685" cy="296" r="44"/><circle cx="680" cy="322" r="44"/><circle cx="833" cy="302" r="44"/><circle cx="680" cy="345" r="44"/><circle cx="660" cy="355" r="44"/><circle cx="587" cy="353" r="44"/>
        <circle cx="865" cy="341" r="44"/><circle cx="681" cy="395" r="44"/><circle cx="766" cy="364" r="44"/><circle cx="767" cy="377" r="44"/><circle cx="449" cy="360" r="44"/><circle cx="474" cy="370" r="44"/>
        <circle cx="958" cy="352" r="44"/><circle cx="965" cy="358" r="44"/><circle cx="930" cy="368" r="44"/><circle cx="930" cy="380" r="44"/><circle cx="1003" cy="389" r="44"/><circle cx="864" cy="405" r="44"/><circle cx="1059" cy="411" r="44"/><circle cx="1093" cy="426" r="44"/>
        <circle cx="594" cy="441" r="44"/><circle cx="792" cy="450" r="44"/><circle cx="783" cy="453" r="44"/><circle cx="689" cy="459" r="44"/><circle cx="617" cy="480" r="44"/><circle cx="551" cy="497" r="44"/><circle cx="699" cy="512" r="44"/><circle cx="533" cy="550" r="44"/><circle cx="640" cy="546" r="44"/><circle cx="790" cy="540" r="44"/>
        <circle cx="917" cy="479" r="44"/><circle cx="940" cy="514" r="44"/><circle cx="933" cy="518" r="44"/><circle cx="926" cy="522" r="44"/><circle cx="1021" cy="476" r="44"/><circle cx="1009" cy="532" r="44"/><circle cx="1031" cy="559" r="44"/>
        <circle cx="893" cy="560" r="44"/><circle cx="898" cy="565" r="44"/><circle cx="922" cy="530" r="44"/><circle cx="938" cy="586" r="44"/><circle cx="889" cy="612" r="44"/><circle cx="805" cy="608" r="44"/><circle cx="796" cy="627" r="44"/><circle cx="714" cy="638" r="44"/><circle cx="760" cy="659" r="44"/><circle cx="623" cy="649" r="44"/>
        <circle cx="402" cy="682" r="44"/><circle cx="410" cy="714" r="44"/><circle cx="866" cy="705" r="44"/><circle cx="704" cy="740" r="44"/><circle cx="585" cy="814" r="44"/>
        <circle cx="1179" cy="582" r="44"/><circle cx="1283" cy="557" r="44"/><circle cx="1282" cy="568" r="44"/><circle cx="1287" cy="608" r="44"/><circle cx="1300" cy="622" r="44"/><circle cx="1353" cy="664" r="44"/><circle cx="1380" cy="663" r="44"/><circle cx="1400" cy="673" r="44"/><circle cx="1395" cy="722" r="44"/><circle cx="1444" cy="736" r="44"/>
      </g>
      <g class="hole-g" transform="translate(860 390) scale(.33333)">
        <path class="hole-fill" d="M285 85C265 65 240 52 215 55C195 58 175 75 160 90L136 88L128 142C108 190 100 240 97 280C96 320 100 350 108 370C120 395 150 425 225 452C260 455 290 420 302 375C303 360 285 335 235 315L228 258L262 222L258 180Z"/>
        <path class="hole-line" d="M285 85C265 65 240 52 215 55C195 58 175 75 160 90L136 88M128 142C108 190 100 240 97 280C96 320 100 350 108 370C120 395 150 425 225 452C260 455 290 420 302 375C303 360 285 335 235 315L228 258L262 222L258 180"/>
        <path class="rail" d="M220 115L195 150L190 180L165 225L163 265L170 320L175 355L195 372L230 378L232 388M230 375L240 368"/>
        <g class="apt"><circle cx="165" cy="266" r="11"/><circle cx="192" cy="380" r="11"/><circle cx="242" cy="368" r="11"/><circle cx="207" cy="418" r="11"/><circle cx="195" cy="423" r="11"/><circle cx="185" cy="432" r="11"/></g>
      </g>
    </svg>
    <div class="callout">Tworze bufor<br>odpowiednio 50 i 100<br>km dla torów oraz<br>lotnisk, następnie<br>używam narzędzia<br>różnica, by<br>wyodrębnić obszary<br>położeno max 100km<br>od lotnisk i minimum<br>50km od torów.<br>Warstwa różnica to<br>wynik<br><span class="ind">pliku z drogami nie</span><br><span class="ind">mogę znaleźć</span></div>
  </div>
</main>
</body>
</html>
```

FILE: styles.css
```css
* { box-sizing: border-box; }
html, body { margin: 0; height: 100%; overflow: hidden; }
body {
  display: flex; flex-direction: column;
  width: 1418px; height: 792px;
  font: 12px "Open Sans", "Noto Sans", sans-serif;
  color: #111; background: #f0f0f0;
}
.defs { position: absolute; }
.svt, .svs2 { font-family: "Liberation Sans", sans-serif; }
.svi { font-family: "Liberation Serif", serif; font-style: italic; font-weight: 700; }
.svs { font-family: "Liberation Serif", serif; }

.titlebar { height: 26px; flex: none; display: flex; align-items: center; background: #fff; padding: 0 0 4px 7px; }
.applogo { width: 16px; height: 16px; margin-right: 5px; }
.apptitle { font-size: 11.5px; letter-spacing: -.15px; }
.winctl { margin-left: auto; display: flex; margin-right: 0; align-self: flex-start; }
.wbtn { width: 46px; height: 20px; }

.menubar { height: 20px; flex: none; display: flex; align-items: center; background: #f6f6f6; border-bottom: 1px solid #d0d0d0; padding-left: 9px; font-size: 11.5px; }
.mi { display: block; white-space: nowrap; }
.m1 { width: 51px; } .m2 { width: 48px; } .m3 { width: 48px; } .m4 { width: 59px; } .m5 { width: 70px; }
.m6 { width: 56px; } .m7 { width: 52px; } .m8 { width: 46px; } .m9 { width: 80px; } .m10 { width: 80px; }
.m11 { width: 45px; } .m12 { width: 71px; }

.toolbar { height: 39px; flex: none; display: flex; align-items: center; background: linear-gradient(#f8f8f8, #f1f1f1); border-bottom: 1px solid #c4c4c4; }
.tb-last { height: 38px; }
.handle { flex: none; width: 6px; height: 21px; margin: 0 3px; background: radial-gradient(circle, #b0b0b0 .7px, transparent 1px) 0 0/3px 3px; }
.h-wide { margin: 0 1px 0 9px; }
.h-mid { margin: 0 3px 0 9px; }
.h-s { margin: 0 2px 0 8px; }
.h-s2 { margin: 0 2px 0 7px; }
.h-s3 { margin: 0 1px 0 9px; }
.tb { flex: none; width: 33px; height: 33px; display: flex; align-items: center; justify-content: center; border: 1px solid transparent; border-radius: 2px; }
.tb.on { background: #dcdcdc; border-color: #aaa; }
.tb-s { margin-left: 1px; }
.ic { width: 24px; height: 24px; display: block; }
.sep { flex: none; width: 1px; height: 24px; background: #dcdcdc; margin: 0 3px; }
.arrow { flex: none; width: 0; height: 0; margin: 0 1px; border: 4px solid transparent; border-top: 5px solid #444; border-bottom: 0; }
.arrow.light { border-top-color: #aaa; }
.a-s { margin: 0 3px 0 1px; }
.a-3 { margin: 0 3px 0 2px; }

.main { flex: 1; min-height: 0; display: flex; }
.docks { width: 293px; flex: none; display: flex; flex-direction: column; }
.dock-browser { height: 373px; flex: none; display: flex; flex-direction: column; }
.dock-layers { flex: 1; display: flex; flex-direction: column; min-height: 0; }
.dock-head { height: 20px; flex: none; display: flex; align-items: center; justify-content: space-between; padding: 0 2px 0 3px; font-size: 11.5px; }
.dock-layers .dock-head { margin-top: 6px; }
.dock-tools { height: 30px; flex: none; display: flex; align-items: center; padding-left: 2px; }
.dock-btns { display: flex; gap: 3px; }
.db { width: 11px; height: 11px; display: block; }
.dt-l { height: 30px; padding: 0 0 2px 2.500px; }
.pt { width: 25.500px; flex: none; display: flex; justify-content: center; }
.dt-l .pt { width: 25px; }
.pi { width: 16px; height: 16px; display: block; }
.a-l { margin: 0 2px 0 1.500px; }

.tree-wrap { flex: 1; min-height: 0; display: flex; background: #fff; border: 1px solid #b4b4b4; border-left: 0; overflow: hidden; }
.tree { flex: 1; list-style: none; margin: 0; padding: 1px 0 0; overflow: hidden; }
.tree li { height: 18px; flex: none; display: flex; align-items: center; white-space: nowrap; font-size: 11.5px; }
.tw { flex: none; width: 0; height: 0; margin: 0 19px 0 7px; border: 4px solid transparent; border-left: 5px solid #555; border-right: 0; }
.tw.none { border-left-color: transparent; }
.ti { width: 17px; height: 17px; flex: none; margin-right: 5px; display: block; margin-left: -8px; }
.scroll { width: 15px; flex: none; display: flex; flex-direction: column; background: #f4f4f4; border-left: 1px solid #d8d8d8; }
.sb-up, .sb-down { height: 15px; flex: none; position: relative; }
.sb-up::after, .sb-down::after { content: ""; position: absolute; left: 3px; top: 5px; border: 4px solid transparent; }
.sb-up::after { border-bottom: 4px solid #444; border-top: 0; }
.sb-down::after { border-top: 4px solid #444; border-bottom: 0; }
.sb-track { flex: 1; display: flex; flex-direction: column; justify-content: flex-end; }
.sb-thumb { height: 31px; display: block; background: #dcdcdc; }

.layers { flex: 1; list-style: none; margin: 0; padding: 0; background: #fff; border-top: 1px solid #b4b4b4; border-right: 1px solid #b4b4b4; }
.layers li { height: 18px; display: flex; align-items: center; position: relative; padding-left: 23px; }
.layers li.cur { background: #f0f0f0; }
.cb { width: 14px; height: 14px; flex: none; background: #fff; border: 1px solid #a8a8a8; margin-right: 6px; position: relative; }
.cb.ck::after { content: ""; position: absolute; left: 4px; top: 0; width: 5px; height: 9px; border: solid #111; border-width: 0 2px 2px 0; transform: rotate(40deg); }
.sw { width: 16px; height: 16px; flex: none; margin-right: 6px; }
.sw1 { background: #85517b; border: 1px solid #5e3a57; }
.sw2 { background: #e5578e; border: 1px solid #a63e66; }
.sw3 { height: 2px; background: #cdb0a0; }
.sw4 { background: #bdd14f; border: 1px solid #7f8d35; }
.sw5 { width: 6px; height: 6px; margin: 0 11px 0 5px; border-radius: 50%; background: #6b7a7c; }
.ln { font-weight: 700; font-size: 11.5px; color: #000; }
.ln.active { text-decoration: underline; }
.ln.off { font-style: italic; color: #808080; letter-spacing: .25px; }
.mem { position: absolute; left: 271px; top: 1px; width: 16px; height: 16px; background: #f4f4f4; border-radius: 2px; outline: 1px solid #e4e4e4; outline-offset: -1px; }

.split { width: 7px; flex: none; display: flex; align-items: center; justify-content: center; padding-top: 8px; }
.split-dots { width: 2px; height: 16px; background: radial-gradient(circle, #aaa .7px, transparent 1px) 0 0/2px 3px; }
.map { flex: 1; position: relative; background: #fff; border-top: 1px solid #b4b4b4; border-left: 1px solid #b4b4b4; overflow: hidden; min-width: 0; }
.canvas { position: absolute; left: -1px; top: 0; width: 1118px; height: 629px; display: block; }
.bufs circle { fill: #b5474b; stroke: #262626; stroke-width: 1; }
.hole-fill { fill: #fff; stroke: none; }
.hole-line { fill: none; stroke: #333; stroke-width: 3; }
.rail { fill: none; stroke: #b5835f; stroke-width: 3; }
.apt circle { fill: #6b7a7c; stroke: #4d595a; stroke-width: 2; }
.callout {
  position: absolute; left: 873px; top: 28px; width: 212px; height: 271px;
  border: 5px solid #ed1c24; background: #fff;
  padding: 7px 0 0 20px; font: 13px/18px "Open Sans", "Noto Sans", sans-serif; color: #000; white-space: nowrap;
}
.ind { padding-left: 5px; }
```
